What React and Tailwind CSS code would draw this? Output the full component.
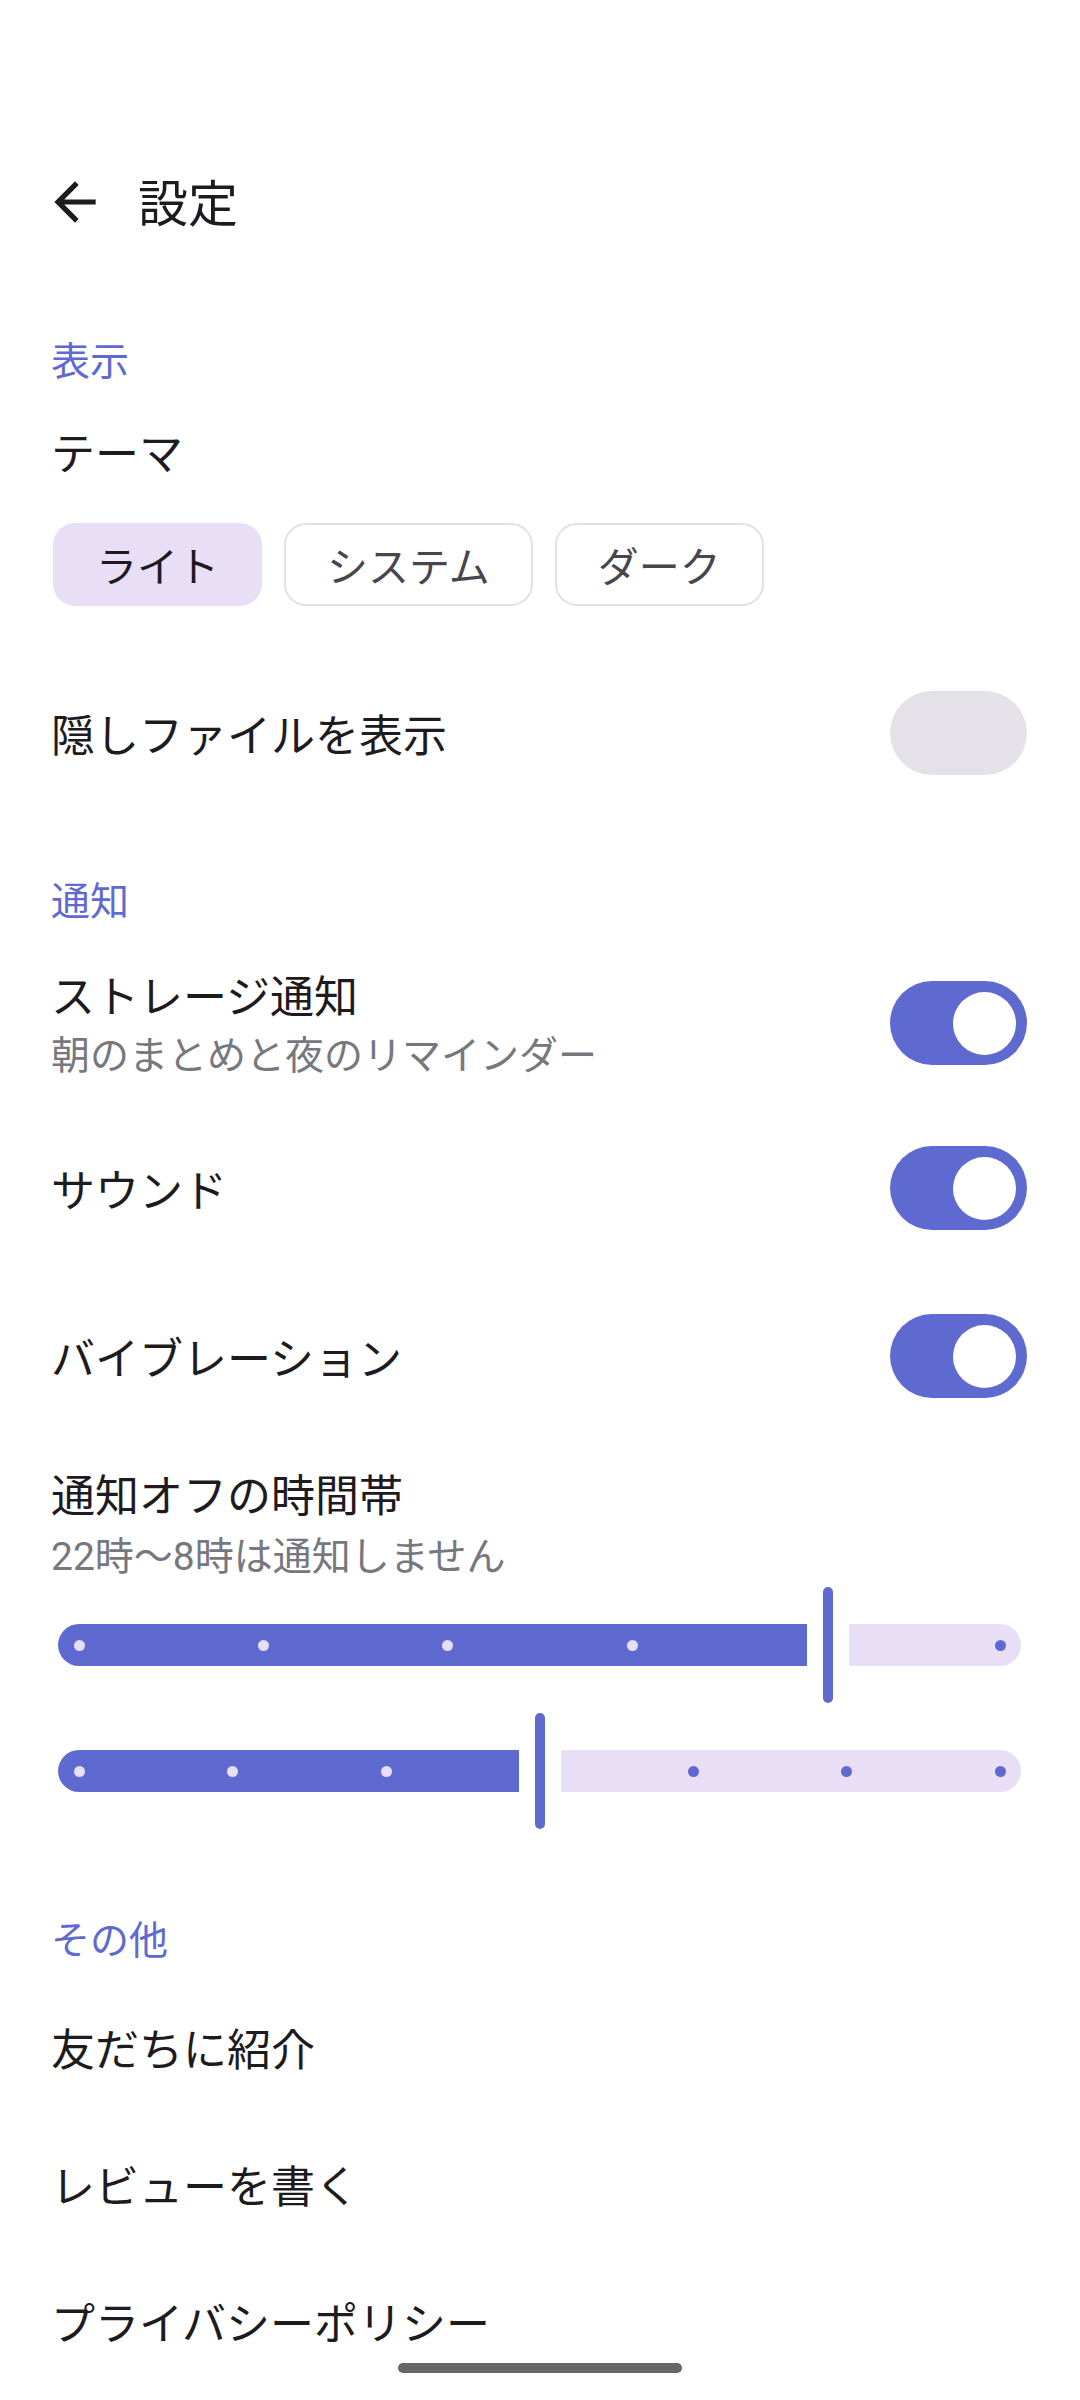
import React, { useState } from 'react'

const FONT = { fontFamily: 'Roboto, "Noto Sans CJK JP", sans-serif' }

function Toggle({ on }) {
  return (
    <div
      className={
        on
          ? 'w-[137px] h-[84px] rounded-full bg-[#5f6ad1] flex items-center justify-end pr-[11px] shrink-0'
          : 'w-[137px] h-[84px] rounded-full bg-[#e4e2e8] shrink-0'
      }
    >
      {on && <div className="w-[63px] h-[63px] rounded-full bg-white" />}
    </div>
  )
}

function SectionLabel({ children, className }) {
  return (
    <div className={'h-[64px] flex items-center pt-[6px] px-[51px] text-[39px] text-[#5f6ad1] ' + (className || '')}>
      {children}
    </div>
  )
}

// dot x positions are relative to the segment's left edge
function Slider({ activeW, activeDots, inactiveDots, className }) {
  return (
    <div className={'h-[116px] flex items-center pl-[58px] pr-[59px] ' + (className || '')}>
      <div
        className="relative h-[42px] bg-[#5f6ad1] rounded-l-full rounded-r-[5px] shrink-0"
        style={{ width: activeW }}
      >
        {activeDots.map(x => (
          <span key={x} className="absolute top-[16px] w-[11px] h-[11px] rounded-full bg-[#e8dff7]" style={{ left: x - 5.5 }} />
        ))}
      </div>
      <div className="w-[10px] h-[116px] mx-[16px] rounded-full bg-[#5f6ad1] shrink-0" />
      <div className="relative flex-1 h-[42px] bg-[#e8dff7] rounded-r-full rounded-l-[5px]">
        {inactiveDots.map(x => (
          <span key={x} className="absolute top-[16px] w-[11px] h-[11px] rounded-full bg-[#5f6ad1]" style={{ left: x - 5.5 }} />
        ))}
      </div>
    </div>
  )
}

export default function App() {
  const [theme, setTheme] = useState('light')
  const themes = [
    { key: 'light', label: 'ライト' },
    { key: 'system', label: 'システム' },
    { key: 'dark', label: 'ダーク' },
  ]

  return (
    <div className="relative w-full h-[2400px] bg-white overflow-hidden text-[#1d1b20]" style={FONT}>
      <div className="h-[140px]" />

      {/* Header */}
      <div className="h-[124px] flex items-center pl-[44px]">
        <svg width="62" height="62" viewBox="0 0 24 24" fill="#1d1b20">
          <path d="M20 11H7.83l5.59-5.59L12 4l-8 8 8 8 1.41-1.41L7.83 13H20v-2z" />
        </svg>
        <h1 className="ml-[32px] pt-[6px] text-[50px] font-normal leading-none">設定</h1>
      </div>

      {/* 表示 */}
      <SectionLabel className="mt-[63px]">表示</SectionLabel>
      <div className="mt-[28px] h-[64px] flex items-center pt-[8px] px-[51px] text-[44px]">テーマ</div>
      <div className="mt-[40px] flex gap-[22px] pl-[53px]">
        {themes.map(t => (
          <button
            key={t.key}
            onClick={() => setTheme(t.key)}
            className={
              theme === t.key
                ? 'h-[83px] px-[43px] pt-[8px] rounded-[22px] bg-[#e8dff7] text-[41px] text-[#1d1b20] leading-none'
                : 'h-[83px] px-[41px] pt-[8px] rounded-[22px] border-[2px] border-[#e1e0e5] bg-white text-[41px] text-[#49454f] leading-none'
            }
          >
            {t.label}
          </button>
        ))}
      </div>

      <div className="mt-[57px] h-[140px] flex items-center justify-between pl-[51px] pr-[53px]">
        <span className="pt-[8px] text-[44px]">隠しファイルを表示</span>
        <Toggle on={false} />
      </div>

      {/* 通知 */}
      <SectionLabel className="mt-[64px]">通知</SectionLabel>

      <div className="mt-[22px] h-[140px] flex items-center justify-between pl-[51px] pr-[53px]">
        <div className="flex flex-col pt-[8px]">
          <span className="text-[44px] leading-[58px]">ストレージ通知</span>
          <span className="text-[39px] leading-[58px] text-[#76787e]">朝のまとめと夜のリマインダー</span>
        </div>
        <Toggle on />
      </div>

      <div className="mt-[25px] h-[140px] flex items-center justify-between pl-[51px] pr-[53px]">
        <span className="pt-[8px] text-[44px]">サウンド</span>
        <Toggle on />
      </div>

      <div className="mt-[28px] h-[140px] flex items-center justify-between pl-[51px] pr-[53px]">
        <span className="pt-[8px] text-[44px]">バイブレーション</span>
        <Toggle on />
      </div>

      <div className="mt-[41px] flex flex-col px-[51px]">
        <span className="text-[44px] leading-[60px]">通知オフの時間帯</span>
        <span className="text-[39px] leading-[60px] text-[#76787e]">22時〜8時は通知しません</span>
      </div>

      <Slider className="mt-0" activeW={749} activeDots={[21, 205, 389, 574]} inactiveDots={[151]} />
      <Slider className="mt-[10px]" activeW={461} activeDots={[21, 174, 328]} inactiveDots={[132, 285, 439]} />

      {/* その他 */}
      <SectionLabel className="mt-[77px]">その他</SectionLabel>
      <div className="mt-[8px] flex flex-col">
        {['友だちに紹介', 'レビューを書く', 'プライバシーポリシー'].map(label => (
          <div key={label} className="h-[137px] flex items-center pt-[8px] px-[51px] text-[44px]">
            {label}
          </div>
        ))}
      </div>

      {/* gesture bar */}
      <div className="absolute left-[398px] top-[2363px] w-[284px] h-[10px] rounded-full bg-[#666666]" />
    </div>
  )
}
